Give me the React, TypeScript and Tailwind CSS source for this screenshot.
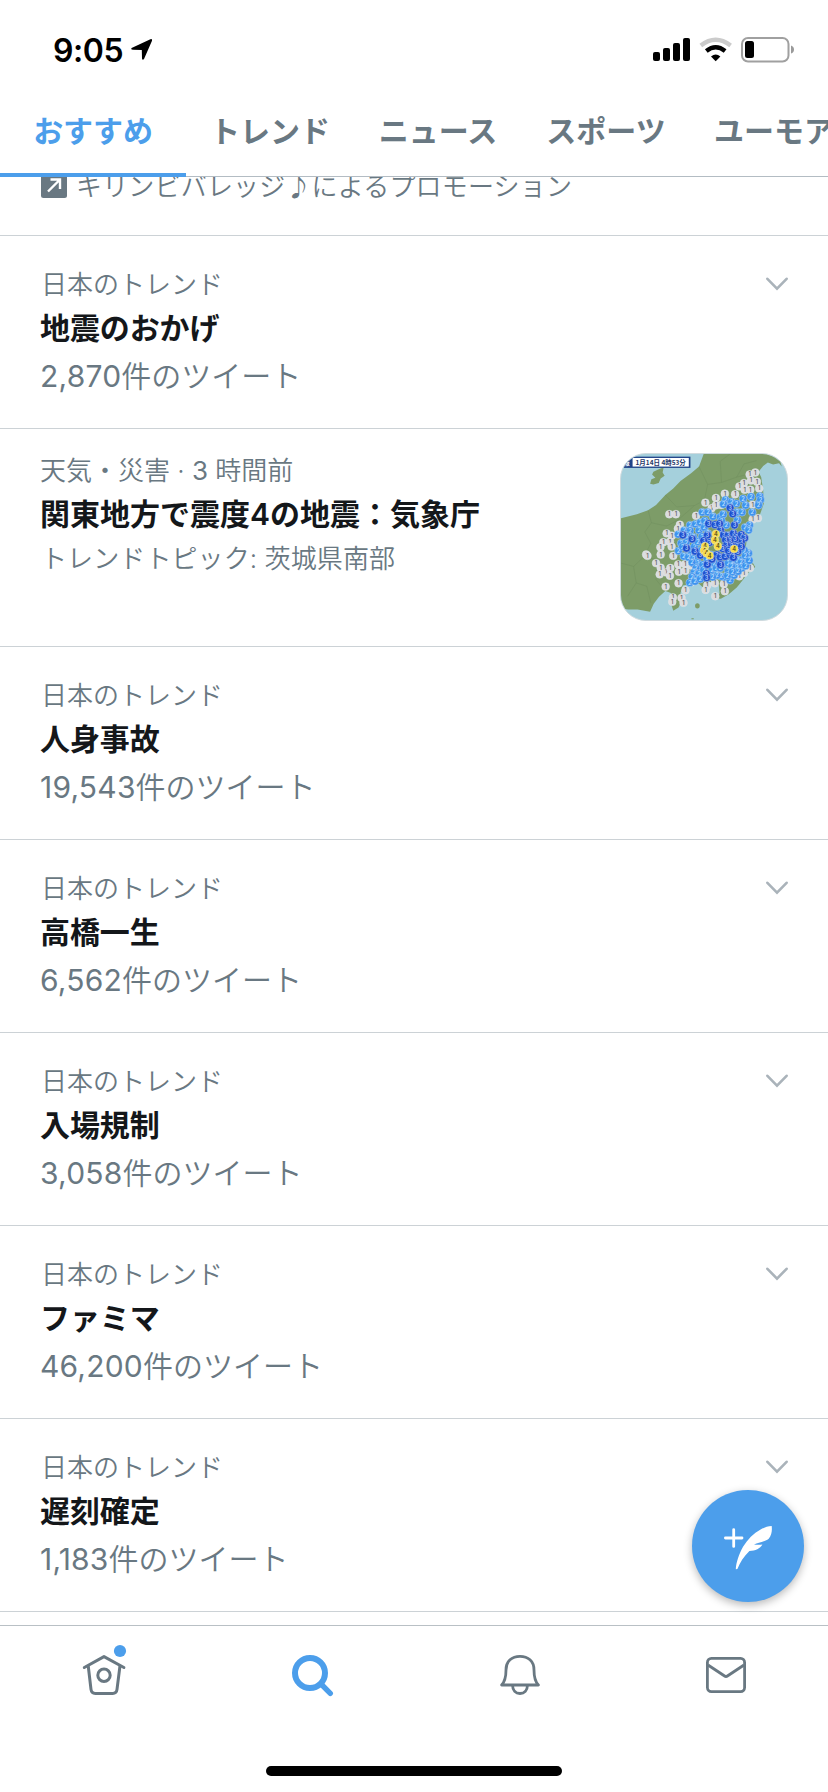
type Trend = {
  title: string;
  count: string;
};

type Marker = [number, number];

const tabs = ["トレンド", "ニュース", "スポーツ", "ユーモア"];

const trends: Trend[] = [
  { title: "人身事故", count: "19,543" },
  { title: "高橋一生", count: "6,562" },
  { title: "入場規制", count: "3,058" },
  { title: "ファミマ", count: "46,200" },
  { title: "遅刻確定", count: "1,183" },
];

// Seismic intensity stations, grouped by level
const level1: Marker[] = [
  [389, 62], [406, 56], [393, 80], [411, 84], [372, 88], [358, 98], [418, 104], [374, 108], [391, 108],
  [345, 122], [314, 120], [287, 133], [255, 147], [274, 164], [287, 155], [303, 154], [398, 153],
  [146, 182], [166, 182], [227, 187], [414, 194], [398, 198], [178, 214], [172, 226], [138, 240], [154, 247],
  [128, 267], [148, 265], [119, 282], [153, 280], [120, 304], [158, 308], [76, 304], [80, 308], [106, 330],
  [120, 344], [137, 358], [149, 345], [117, 364], [148, 368], [173, 334], [194, 333], [212, 337], [175, 356],
  [195, 353], [135, 401], [174, 391], [195, 412], [157, 434], [155, 447], [183, 435], [189, 450],
  [261, 397], [284, 391], [311, 393], [256, 411], [314, 415], [285, 430], [358, 370], [372, 360], [390, 345], [212, 388],
];

const level2: Marker[] = [
  [316, 139], [334, 145], [369, 135], [393, 129], [420, 128], [417, 148], [377, 155], [422, 138], [416, 155], [310, 152],
  [246, 176], [263, 176], [278, 189], [300, 191], [309, 182], [351, 176], [366, 176], [397, 176], [330, 160], [349, 150],
  [209, 215], [225, 212], [240, 207], [253, 202], [318, 215], [304, 202], [352, 200], [389, 215], [375, 222], [386, 230],
  [191, 231], [236, 231], [209, 232], [173, 243], [200, 247], [219, 252], [252, 222], [182, 270], [197, 268], [174, 293],
  [186, 280], [204, 287], [222, 280], [213, 300], [190, 309], [204, 312], [219, 317], [232, 329], [215, 328], [238, 340],
  [227, 345], [247, 335], [221, 358], [236, 362], [215, 371], [232, 376], [208, 389], [224, 385], [240, 378], [270, 335],
  [282, 330], [250, 350], [275, 352], [288, 345], [310, 335], [324, 330], [338, 325], [352, 320], [369, 318], [382, 318],
  [386, 300], [373, 292], [377, 330], [363, 328], [350, 342], [365, 345], [377, 338], [335, 340], [324, 355], [312, 372],
  [303, 370], [330, 382], [342, 367], [322, 368], [290, 367], [277, 372], [376, 308], [388, 322], [354, 355], [337, 356],
  [232, 265], [250, 278], [243, 292], [260, 315], [272, 305], [300, 345], [262, 240], [245, 250],
];

const level3: Marker[] = [
  [330, 163], [338, 181], [343, 215], [265, 211], [284, 214], [298, 211], [301, 231], [187, 245], [215, 257], [261, 246],
  [310, 245], [324, 246], [340, 240], [350, 250], [364, 244], [374, 254], [364, 266], [345, 257], [330, 263], [316, 260],
  [352, 278], [335, 278], [319, 276], [308, 286], [198, 285], [224, 294], [240, 306], [267, 268], [250, 262], [290, 305],
  [300, 312], [315, 310], [330, 305], [340, 313], [325, 292], [301, 335], [261, 334], [258, 362], [259, 374], [275, 318],
  [364, 280], [353, 295],
];

const level4: Marker[] = [
  [287, 242], [284, 261], [293, 279], [254, 279], [251, 292], [258, 300], [342, 287], [268, 307],
];

function Dots({ points, fill, ink, label }: { points: Marker[]; fill: string; ink: string; label: string }) {
  return (
    <g>
      {points.map(([x, y], i) => (
        <g key={i}>
          <circle cx={x} cy={y} r="12" fill={fill} stroke="#dfe9f2" strokeOpacity="0.55" strokeWidth="2" />
          <text x={x} y={y + 6} textAnchor="middle" fontSize="17" fontWeight="600" fill={ink}>
            {label}
          </text>
        </g>
      ))}
    </g>
  );
}

function QuakeMap() {
  return (
    <div className="h-[168px] w-[168px] shrink-0 overflow-hidden rounded-[26px] border border-[#cfdade] bg-[#a5d0dc]">
      <svg viewBox="0 0 502 502" className="h-full w-full">
        <path
          d="M250 0 L236 38 L212 58 L180 82 L158 104 L134 124 L106 154 L82 170 L48 182 L0 194 V467 L22 470 L50 470 L88 477 L99 453 L115 432 L134 414 L151 420 L150 448 L158 474 L174 464 L182 446 L180 420 L187 398 L212 392 L236 392 L248 404 L258 390 L276 386 L296 398 L298 422 L284 436 L302 438 L326 424 L350 404 L366 384 L386 358 L406 342 L398 328 L382 306 L378 278 L382 240 L398 212 L420 184 L432 150 L430 110 L424 70 L416 54 L430 36 L444 26 L460 32 L478 28 L486 38 L480 14 L440 0 Z"
          fill="#7d9c68"
        />
        <path d="M114 46 L129 40 L126 56 L132 66 L120 74 L114 88 L98 92 L88 90 L92 76 L104 72 L94 62 L98 54 Z" fill="#7d9c68" />
        <ellipse cx="231" cy="459" rx="7" ry="8" fill="#7d9c68" />
        <path d="M213 497 h7 v3 h-7 Z" fill="#7d9c68" />
        <g fill="none" stroke="#718f5e" strokeWidth="1.5">
          <path d="M236 38 L262 92 L304 86 L350 70 L412 54" />
          <path d="M134 124 L168 160 L222 156 L252 140 L262 92" />
          <path d="M82 170 L92 208 L72 236 L90 270 L70 310 L38 340 L46 390 L20 430" />
          <path d="M92 208 L138 218 L172 200 L222 156" />
          <path d="M38 340 L0 330" />
          <path d="M70 310 L110 320 L106 380 L134 414" />
          <path d="M46 390 L78 400 L90 450" />
          <path d="M304 86 L300 22 L330 0" />
          <path d="M350 70 L372 30 L410 20" />
        </g>
        <g className="font-['Inter','Noto_Sans_CJK_JP',sans-serif]">
          <Dots points={level1} fill="#dcdcde" ink="#66676d" label="1" />
          <Dots points={level2} fill="#3e93ee" ink="#bfe0ff" label="2" />
          <Dots points={level3} fill="#1e50cf" ink="#b9cdfb" label="3" />
          <Dots points={level4} fill="#f8dc48" ink="#4d4720" label="4" />
          <rect x="0" y="8" width="210" height="34" fill="#1f4389" />
          <rect x="35" y="12" width="170" height="26" fill="#fff" />
          <text x="44" y="33" fontSize="20" fontWeight="700" fill="#1f3768" textLength="152" lengthAdjust="spacingAndGlyphs" className="font-['Noto_Sans_CJK_JP',sans-serif]">
            1月14日 4時53分
          </text>
          <text x="6" y="33" fontSize="20" fontWeight="600" fill="#fff">
            報
          </text>
        </g>
      </svg>
    </div>
  );
}

function StatusBar() {
  return (
    <div className="flex h-[88px] items-start justify-between pt-[34px] pr-[33px] pl-[53px]">
      <div className="flex items-start">
        <span className="w-[77px] text-[32px] leading-[34px] font-semibold tracking-[-0.4px] text-black">9:05</span>
        <svg viewBox="0 0 24 24" className="mt-1 h-6 w-6 fill-black">
          <path d="M1.6 10 L20.4 1.2 Q22.6 .6 22 2.8 L14 21 Q12.6 22.8 12 20.6 L11.8 12 L3 11.8 Q.4 11.4 1.6 10 Z" />
        </svg>
      </div>
      <svg viewBox="0 0 143 28" className="mt-px h-7 w-[143px]">
        <rect x="1" y="17" width="7" height="9" rx="2" />
        <rect x="11" y="13" width="7" height="13" rx="2" />
        <rect x="21" y="8" width="7" height="18" rx="2" />
        <rect x="31" y="3" width="7" height="23" rx="2" />
        <path d="M48.8 10.4 Q63.7 -1 78.6 10.4" fill="none" stroke="#cbcbcb" strokeWidth="4.4" />
        <path d="M54.3 16 Q63.7 8.6 73.1 16" fill="none" stroke="#000" strokeWidth="4.4" />
        <path d="M59 21.4 Q63.7 17.6 68.4 21.4 L63.7 26.2 Z" />
        <rect x="90" y="3" width="46.5" height="23.5" rx="6" fill="none" stroke="#a0a0a0" strokeWidth="2" />
        <path d="M139 10.6 Q142 11.6 142 14.6 Q142 17.6 139 18.6 Z" fill="#9a9a9a" />
        <rect x="93" y="6" width="9" height="17" rx="2.5" />
      </svg>
    </div>
  );
}

function TabBar() {
  return (
    <div className="flex h-[88px] text-[30px] leading-[87px] font-bold whitespace-nowrap text-[#697882]">
      <div className="relative w-[186px] shrink-0 text-center tracking-[-0.1px] text-[#4c9eeb]">
        おすすめ
        <span className="absolute -bottom-px left-0 h-1 w-full bg-[#4c9eeb]" />
      </div>
      {tabs.map((tab) => (
        <div key={tab} className="w-[168px] shrink-0 text-center">
          {tab}
        </div>
      ))}
    </div>
  );
}

function Chevron() {
  return (
    <svg viewBox="0 0 22 14" className="mt-10 h-[14px] w-[22px] shrink-0" fill="none" stroke="#aab3ba" strokeWidth="2.6" strokeLinecap="round">
      <path d="M1.4 1.8 L11 11.6 L20.6 1.8" />
    </svg>
  );
}

function TrendRow({ title, count }: Trend) {
  return (
    <div className="flex h-[193px] shrink-0 justify-between border-b border-[#ccd2d6] pt-px pr-10 pl-10">
      <div className="pt-7">
        <p className="ml-px text-[26px] leading-10 font-[350] text-[#697882]">日本のトレンド</p>
        <p className="mt-px text-[30px] leading-[44px] font-bold tracking-[-0.1px] text-[#14171a]">{title}</p>
        <p className="mt-0.5 text-[30px] leading-[48px] font-[350] text-[#697882]">
          <span className="font-normal tracking-[0.2px]">{count}</span>件のツイート
        </p>
      </div>
      <Chevron />
    </div>
  );
}

function BottomNav() {
  return (
    <div className="h-[167px] shrink-0 border-t border-[#b9c0c5] bg-white">
      <div className="grid grid-cols-4 justify-items-center pt-[14px]">
        <svg viewBox="0 0 61 61" className="h-[61px] w-[61px]" fill="none" stroke="#697882" strokeWidth="3" strokeLinecap="round" strokeLinejoin="round">
          <path d="M11.3 27.5 L31 16.6 L50.9 27.5" />
          <path d="M15.3 26.5 L18 49.4 Q18.5 53.5 22.3 53.5 H39.7 Q43.5 53.5 44 49.4 L46.9 26.5" />
          <circle cx="31" cy="35.3" r="6.2" />
          <circle cx="47" cy="11" r="6.1" fill="#4c9eeb" stroke="none" />
        </svg>
        <svg viewBox="0 0 61 61" className="h-[61px] w-[61px]" fill="none" stroke="#4c9eeb" strokeLinecap="round">
          <circle cx="30" cy="33" r="15" strokeWidth="6" />
          <path d="M41.5 44.5 L50.3 53.3" strokeWidth="5.4" />
        </svg>
        <svg viewBox="0 0 61 61" className="h-[61px] w-[61px]" fill="none" stroke="#697882" strokeWidth="2.8" strokeLinejoin="round">
          <path d="M14.6 45 Q19 40.5 19 30 C19 21 25 16.4 33 16.4 C41 16.4 47 21 47 30 Q47 40.5 51.4 45 Z" />
          <path d="M25.6 45.5 C25.6 50.3 28.6 53.5 33 53.5 C37.4 53.5 40.4 50.3 40.4 45.5" />
        </svg>
        <svg viewBox="0 0 61 61" className="h-[61px] w-[61px]" fill="none" stroke="#697882" strokeWidth="2.8" strokeLinejoin="round">
          <rect x="13.4" y="18.4" width="37.2" height="33.2" rx="4" />
          <path d="M14 25 L30.6 36 Q32 37 33.4 36 L50 25" />
        </svg>
      </div>
      <div className="mx-auto mt-[65px] h-[10px] w-[296px] rounded-full bg-black" />
    </div>
  );
}

export default function App() {
  return (
    <div
      lang="ja"
      className="relative flex h-[1792px] w-[828px] flex-col overflow-hidden bg-white font-['Inter','Noto_Sans_CJK_JP',sans-serif]"
    >
      <header className="h-[177px] shrink-0 border-b border-[#b3bcc3]">
        <StatusBar />
        <TabBar />
      </header>

      <main className="flex min-h-0 flex-1 flex-col overflow-hidden">
        <div className="h-[59px] shrink-0 overflow-hidden border-b border-[#ccd2d6] pl-[41px]">
          <div className="flex h-4 items-center gap-[9px]">
            <svg viewBox="0 0 26 26" className="h-[26px] w-[26px] shrink-0">
              <rect width="26" height="26" rx="2.5" fill="#697882" />
              <path d="M7 19.5 L18.5 8 M9.5 7.5 H19 V17" fill="none" stroke="#fff" strokeWidth="2.4" />
            </svg>
            <p className="font-['Noto_Sans_CJK_JP',sans-serif] text-[26px] leading-4 font-[350] tracking-[0.18px] whitespace-nowrap text-[#697882]">
              キリンビバレッジ♪によるプロモーション
            </p>
          </div>
        </div>

        <TrendRow title="地震のおかげ" count="2,870" />

        <div className="flex h-[218px] shrink-0 justify-between border-b border-[#ccd2d6] pt-6 pr-10 pl-10">
          <div className="-mt-0.5">
            <p className="text-[26px] leading-10 font-[350] text-[#697882]">
              天気・災害 · <span className="font-normal">3</span> 時間前
            </p>
            <p className="mt-px text-[30px] leading-[44px] font-bold text-[#14171a]">
              関東地方で震度<span className="font-semibold">4</span>の地震：気象庁
            </p>
            <p className="mt-[3px] ml-px text-[26px] leading-10 font-[350] tracking-[0.1px] text-[#697882]">トレンドトピック: 茨城県南部</p>
          </div>
          <QuakeMap />
        </div>

        {trends.map((trend) => (
          <TrendRow key={trend.title} {...trend} />
        ))}
      </main>

      <BottomNav />

      <button
        type="button"
        className="absolute right-6 bottom-[190px] flex h-28 w-28 items-center justify-center rounded-full bg-[#4c9eeb] shadow-[0_3px_8px_rgba(0,0,0,0.28)]"
      >
        <svg viewBox="0 0 50 46" className="mt-0.5 h-[46px] w-[50px]">
          <path d="M2.4 14 H19 M10.7 5.6 V22.4" fill="none" stroke="#fff" strokeWidth="2.8" strokeLinecap="round" />
          <path
            d="M12.8 45.2 C13 39 16 30 20.2 22.6 C24.6 15.2 30.4 9.4 37.6 5.4 C41.2 3.4 44.8 2.3 48.7 2 C49.2 6.6 48.8 11.2 45.7 14.7 C42.4 17.8 36 18 31 20.6 C33.8 20.8 36.8 21 39.4 20.4 C37 24.6 32.6 26.6 26.4 27 C20.8 32.4 17 38.6 14.4 45 Z"
            fill="#fff"
          />
        </svg>
      </button>
    </div>
  );
}
